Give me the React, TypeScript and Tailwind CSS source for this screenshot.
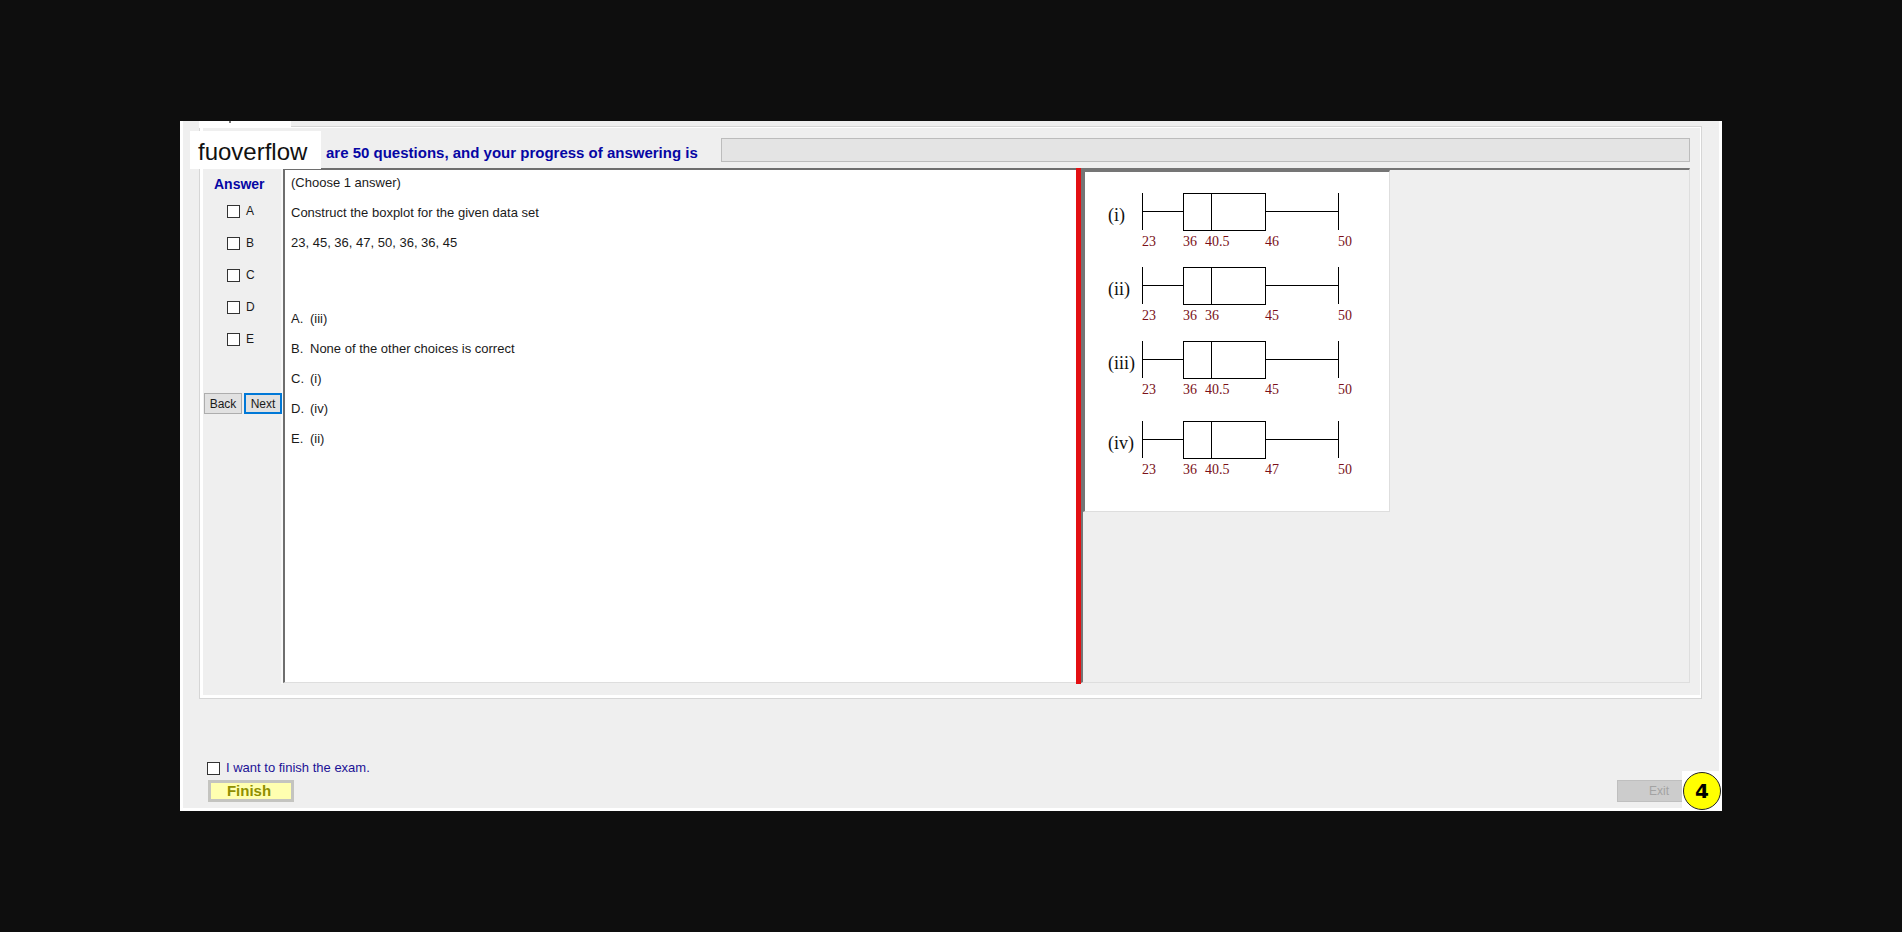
const choices = ["A", "B", "C", "D", "E"];

const question = ["(Choose 1 answer)", "Construct the boxplot for the given data set", "23, 45, 36, 47, 50, 36, 36, 45"];

const answers = [
  { letter: "A.", text: "(iii)" },
  { letter: "B.", text: "None of the other choices is correct" },
  { letter: "C.", text: "(i)" },
  { letter: "D.", text: "(iv)" },
  { letter: "E.", text: "(ii)" },
];

const plots = [
  { name: "(i)", y: 21, median: "40.5", q3: "46" },
  { name: "(ii)", y: 95, median: "36", q3: "45" },
  { name: "(iii)", y: 169, median: "40.5", q3: "45" },
  { name: "(iv)", y: 249, median: "40.5", q3: "47" },
];

const checkbox = "size-[13px] shrink-0 appearance-none border border-[#333] bg-white checked:bg-[#0078d7]";

function BoxPlots() {
  return (
    <svg width="304" height="339" viewBox="0 0 304 339" role="img" aria-label="Four boxplots" className="block bg-white font-['Liberation_Serif',serif]">
      {plots.map((p) => (
        <g key={p.name} transform={`translate(0 ${p.y})`}>
          <path d="M57.5 0V37M57.5 18.5H98M180.5 18.5H253M253.5 0V37M98.5 .5H180.5V37.5H98.5ZM126.5 0V37" fill="none" stroke="#000" shapeRendering="crispEdges" />
          <text x="23" y="28" fontSize="18" fill="#111">{p.name}</text>
          <g fontSize="14" fill="#7a1018">
            <text x="57" y="53">23</text>
            <text x="98" y="53">36</text>
            <text x="120" y="53">{p.median}</text>
            <text x="180" y="53">{p.q3}</text>
            <text x="253" y="53">50</text>
          </g>
        </g>
      ))}
    </svg>
  );
}

export default function App() {
  return (
    <div className="min-h-screen bg-[#0e0e0e] px-[180px] py-[121px] font-['Liberation_Sans',Arial,sans-serif] text-[#1a1a1a]">
      <main className="relative border-x-[3px] border-b-[3px] border-white bg-[#efefef] pr-[17px] pl-4">
        <div className="flex h-[5px]">
          <div className="h-[7px] w-[92px] bg-white pl-[30px]">
            <div className="h-[2px] w-[2px] bg-[#777]" />
          </div>
        </div>

        <section className="border border-[#d6d6d6]">
          <div className="border-b-[3px] border-l-[3px] border-t border-r border-white pb-[11px]">
            <header className="flex h-10 items-center pt-1 pr-[10px] pl-[123px]">
              <h1 className="w-[395px] shrink-0 pt-[6px] text-[15px] leading-4 font-bold whitespace-nowrap text-[#0606a4]">
                are 50 questions, and your progress of answering is
              </h1>
              <div role="progressbar" aria-label="Progress of answering" aria-valuenow={0} className="h-6 grow border border-[#bcbcbc] bg-[#e4e4e4]" />
            </header>

            <div className="flex pr-[10px]">
              <div className="w-20 shrink-0 border-r-2 border-[#f8f8f8] pt-2">
                <h2 className="pl-[11px] text-[14px] leading-4 font-bold text-[#0606a4]">Answer</h2>
                <div className="mt-[3px] pl-6">
                  {choices.map((c) => (
                    <label key={c} className="flex h-8 items-center gap-[6px] text-[12px] leading-4">
                      <input type="checkbox" className={checkbox} />
                      {c}
                    </label>
                  ))}
                </div>
                <div className="mt-[38px] flex gap-[2px] pl-px text-[12px] leading-4">
                  <button className="h-[21px] w-[38px] shrink-0 border border-[#adadad] bg-[#e1e1e1]">Back</button>
                  <button className="h-[21px] w-[38px] shrink-0 border-2 border-[#0078d7] bg-[#e1e1e1]">Next</button>
                </div>
              </div>

              <div className="grid h-[516px] min-w-0 grow grid-cols-[793fr_5px_609fr]">
                <article className="mb-px flex flex-col gap-[6px] border-t-2 border-l-2 border-b border-[#6e6e6e] border-b-[#dedede] bg-white pt-px pl-[6px] text-[13px] leading-6">
                  {question.map((line) => (
                    <p key={line}>{line}</p>
                  ))}
                  <ul className="mt-[46px] flex flex-col gap-[6px]">
                    {answers.map((a) => (
                      <li key={a.letter} className="flex">
                        <span className="w-[19px]">{a.letter}</span>
                        {a.text}
                      </li>
                    ))}
                  </ul>
                </article>
                <div className="bg-[#e30f12]" />
                <div className="mb-px border-2 border-r border-b border-[#757575] border-r-[#dedede] border-b-[#dedede]">
                  <div className="w-fit border-t-2 border-r border-b border-l-2 border-[#757575] border-r-[#dedede] border-b-[#dedede]">
                    <BoxPlots />
                  </div>
                </div>
              </div>
            </div>
          </div>
        </section>

        <footer className="flex items-end justify-between pt-[61px] pr-px pb-[6px] pl-2">
          <div>
            <label className="flex h-4 items-center gap-[6px] text-[13px] leading-4 text-[#1c1296]">
              <input type="checkbox" className={checkbox} />
              I want to finish the exam.
            </label>
            <button className="mt-1 ml-px block h-[22px] w-[86px] border-[3px] border-[#c4c4c0] bg-[#ffffb0] pr-1 text-[15px] leading-4 font-bold text-[#8f8f00]">
              Finish
            </button>
          </div>
          <button disabled className="h-[22px] w-[84px] border border-[#bfbfbf] bg-[#cccccc] text-[12px] leading-4 text-[#a3a3a3]">
            Exit
          </button>
        </footer>

        <div className="absolute top-[10px] left-[7px] flex h-[38px] w-[131px] items-center bg-white pt-1 pl-2 text-[24px] leading-7 text-[#111]">
          fuoverflow
        </div>
        <div className="absolute -right-[3px] -bottom-[3px] bg-white p-px">
          <div className="flex size-[38px] items-center justify-center rounded-full border border-[#222] bg-[#ffff00] font-['DejaVu_Sans',sans-serif] text-[20px] leading-6 font-bold text-black">
            4
          </div>
        </div>
      </main>
    </div>
  );
}
